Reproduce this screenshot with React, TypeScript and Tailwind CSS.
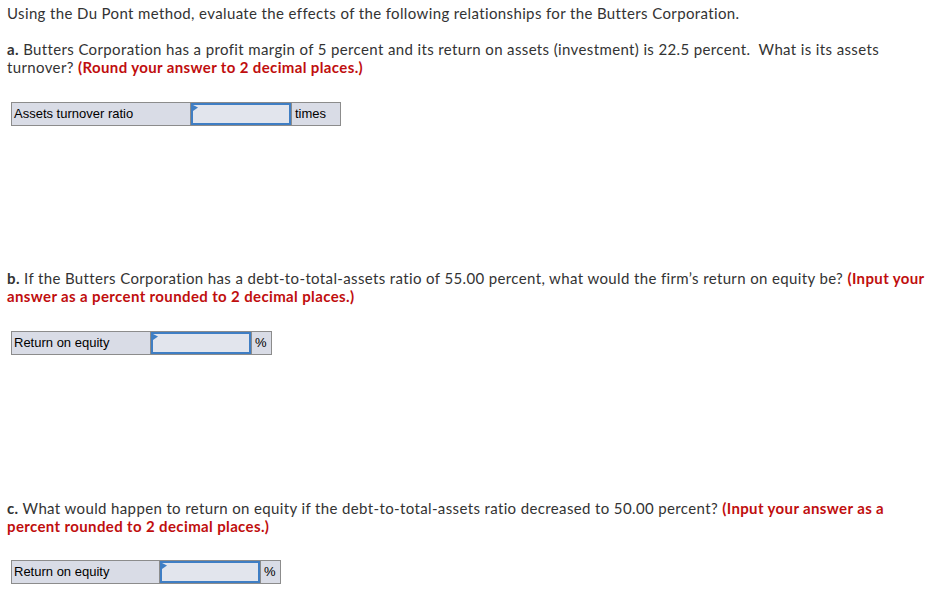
import React from "react";

function Row({ label, labelW, unit, unitW }: { label: string; labelW: string; unit: string; unitW: string }) {
  return (
    <div className="ml-[4px] flex h-[24px] text-[13px] tracking-normal text-black" style={{ fontFamily: '"Liberation Sans", Arial, sans-serif' }}>
      <div className={`${labelW} flex items-center border border-[#8c8c8c] bg-[#d9dce6] pl-[2px]`}>{label}</div>
      <div className="w-[100px] border-y border-[#8c8c8c]">
        <div className="relative h-full border-2 border-[#3f7ec4] bg-[#e2e5ed]">
          <svg className="absolute left-0 top-0" width="5" height="6" viewBox="0 0 5 6">
            <polygon points="0,0 5,2.5 0,6" fill="#3f7ec4" />
          </svg>
        </div>
      </div>
      <div className={`${unitW} flex items-center border border-[#8c8c8c] bg-[#d9dce6] pl-[3px]`}>{unit}</div>
    </div>
  );
}

export default function App() {
  return (
    <div className="w-[936px] h-[606px] bg-white pl-[7px] pr-[6px] pt-[4px] text-[15px] leading-[18px] tracking-[0.37px] text-[#333]" style={{ fontFamily: 'Lato, "Open Sans", sans-serif' }}>
      <p>Using the Du Pont method, evaluate the effects of the following relationships for the Butters Corporation.</p>
      <p className="mt-[18px] pr-[40px]">
        <b>a.</b> Butters Corporation has a profit margin of 5 percent and its return on assets (investment) is 22.5 percent.&nbsp; What is its assets turnover? <b className="text-[#c00e0e]">(Round your answer to 2 decimal places.)</b>
      </p>
      <div className="mt-[26px]">
        <Row label="Assets turnover ratio" labelW="w-[180px]" unit="times" unitW="w-[50px]" />
      </div>
      <p className="mt-[143px]">
        <b>b.</b> If the Butters Corporation has a debt-to-total-assets ratio of 55.00 percent, what would the firm’s return on equity be? <b className="text-[#c00e0e]">(Input your answer as a percent rounded to 2 decimal places.)</b>
      </p>
      <div className="mt-[26px]">
        <Row label="Return on equity" labelW="w-[140px]" unit="%" unitW="w-[21px]" />
      </div>
      <p className="mt-[144px]">
        <b>c.</b> What would happen to return on equity if the debt-to-total-assets ratio decreased to 50.00 percent? <b className="text-[#c00e0e]">(Input your answer as a percent rounded to 2 decimal places.)</b>
      </p>
      <div className="mt-[25px]">
        <Row label="Return on equity" labelW="w-[149px]" unit="%" unitW="w-[21px]" />
      </div>
    </div>
  );
}
